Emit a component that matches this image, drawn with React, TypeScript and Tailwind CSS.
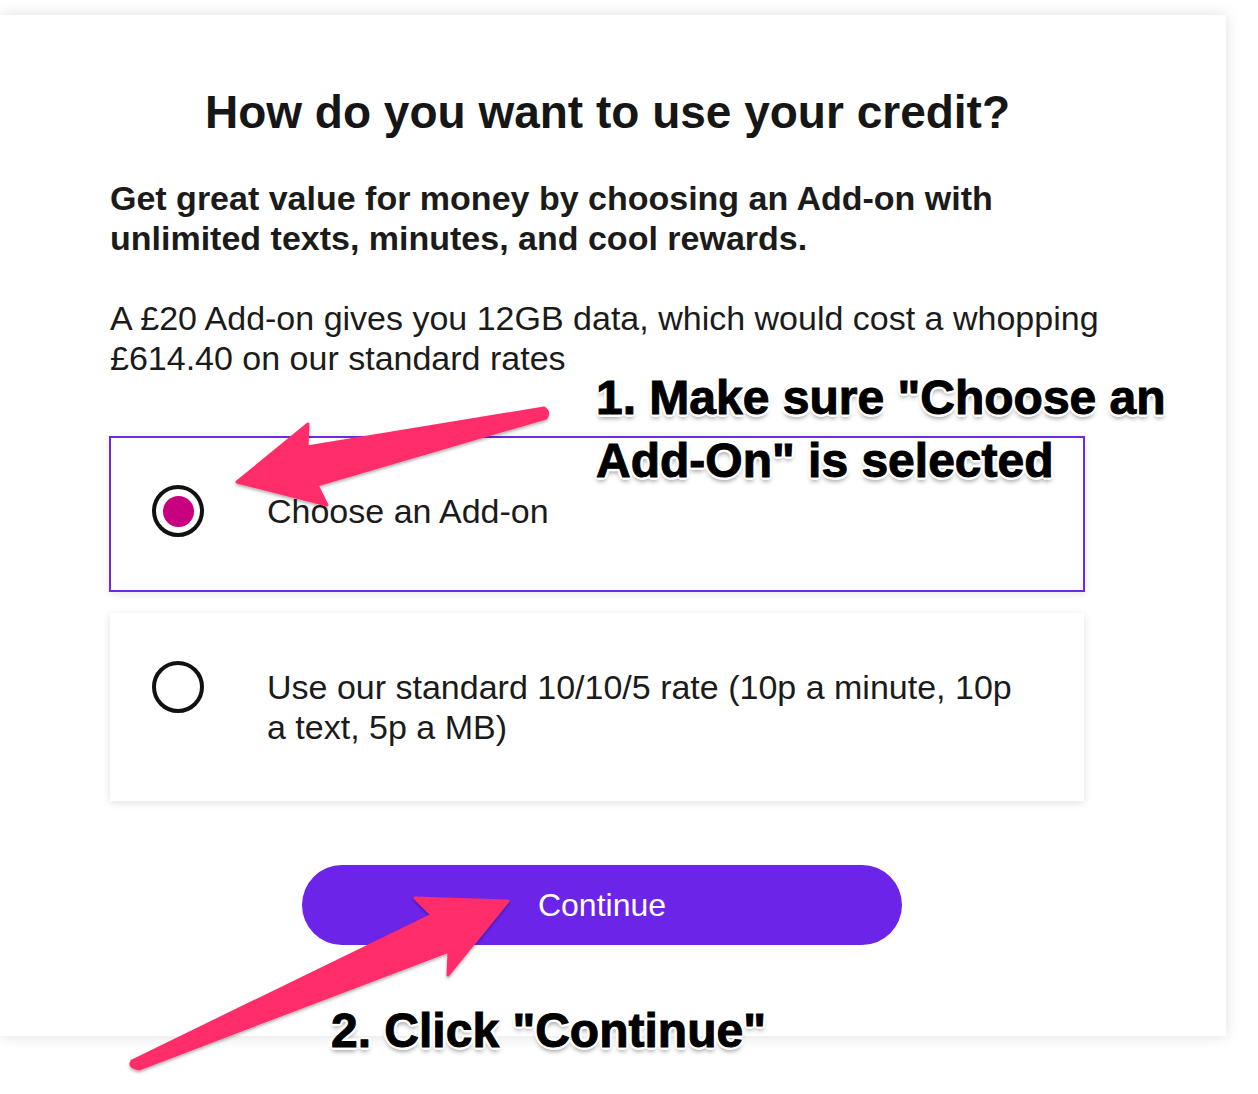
import React from "react";

const outline =
  "[text-shadow:2px_0_0_#fff,-2px_0_0_#fff,0_2px_0_#fff,0_-2px_0_#fff,2px_2px_0_#fff,-2px_2px_0_#fff,2px_-2px_0_#fff,-2px_-2px_0_#fff,3px_0_0_#fff,-3px_0_0_#fff,0_3px_0_#fff,0_-3px_0_#fff,0_4px_5px_rgba(0,0,0,0.45)]";

function Radio({ checked }: { checked?: boolean }) {
  return (
    <div className="mt-[-6px] flex h-[52px] w-[52px] shrink-0 items-center justify-center rounded-full border-4 border-[#111]">
      {checked && <div className="h-[31px] w-[31px] rounded-full bg-[#c8007f]" />}
    </div>
  );
}

function Arrows() {
  return (
    <svg
      className="pointer-events-none absolute left-0 top-0"
      width="1258"
      height="1094"
      viewBox="0 0 1258 1094"
    >
      <defs>
        <filter id="sh" x="-10%" y="-10%" width="120%" height="130%">
          <feDropShadow dx="0" dy="2" stdDeviation="1.5" floodColor="#000" floodOpacity="0.3" />
        </filter>
      </defs>
      <g fill="#ff2d6b" stroke="#ff2d6b" strokeWidth="3" strokeLinejoin="round" filter="url(#sh)">
        <path d="M544 408 L307 447 L308 424 L237 482 L327 505 L317 485 L546 418 Q550 412 544 408 Z" />
        <path d="M132 1061 L432 915 L415 898 L508 901 L448 975 L449 951 L139 1069 Q128 1067 132 1061 Z" />
      </g>
    </svg>
  );
}

export default function App() {
  return (
    <div className="relative h-[1094px] w-[1258px] overflow-hidden bg-white font-['Liberation_Sans',Arial,sans-serif] text-[#1b1b1b]">
      <div className="mt-[15px] w-[1226px] bg-white pb-[91px] pl-[110px] pt-[69px] shadow-[0_0_14px_rgba(0,0,0,0.13)]">
        <div className="flex w-[995px] flex-col">
          <h1 className="text-center text-[46px] font-bold leading-[56px] text-[#161616]">
            How do you want to use your credit?
          </h1>
          <p className="mt-[38px] text-[34px] font-bold leading-[40px]">
            Get great value for money by choosing an Add-on with unlimited texts, minutes, and cool rewards.
          </p>
          <p className="mt-[40px] text-[34px] leading-[40px]">
            A £20 Add-on gives you 12GB data, which would cost a whopping £614.40 on our standard rates
          </p>

          <div className="ml-[-1px] mt-[58px] flex w-[976px] items-start border-2 border-[#6d28e8] bg-white py-[53px] pl-[41px] pr-[60px] shadow-[0_2px_8px_rgba(0,0,0,0.1)]">
            <Radio checked />
            <span className="ml-[63px] text-[34px] leading-[40px]">Choose an Add-on</span>
          </div>

          <div className="mt-[21px] flex w-[974px] items-start bg-white py-[54px] pl-[42px] pr-[60px] shadow-[0_2px_8px_rgba(0,0,0,0.12)]">
            <Radio />
            <span className="ml-[63px] text-[34px] leading-[40px]">
              Use our standard 10/10/5 rate (10p a minute, 10p a text, 5p a MB)
            </span>
          </div>

          <button className="ml-[192px] mt-[64px] flex h-[80px] w-[600px] items-center justify-center rounded-full bg-[#6c24e8] text-[32px] text-white">
            Continue
          </button>
        </div>
      </div>

      <Arrows />

      <div
        className={`absolute left-[596px] top-[366px] text-[48px] font-bold leading-[63px] text-black [-webkit-text-stroke:1px_#000] ${outline}`}
      >
        1. Make sure "Choose an
        <br />
        Add-On" is selected
      </div>
      <div
        className={`absolute left-[331px] top-[999px] text-[48px] font-bold leading-[63px] text-black [-webkit-text-stroke:1px_#000] ${outline}`}
      >
        2. Click "Continue"
      </div>
    </div>
  );
}
